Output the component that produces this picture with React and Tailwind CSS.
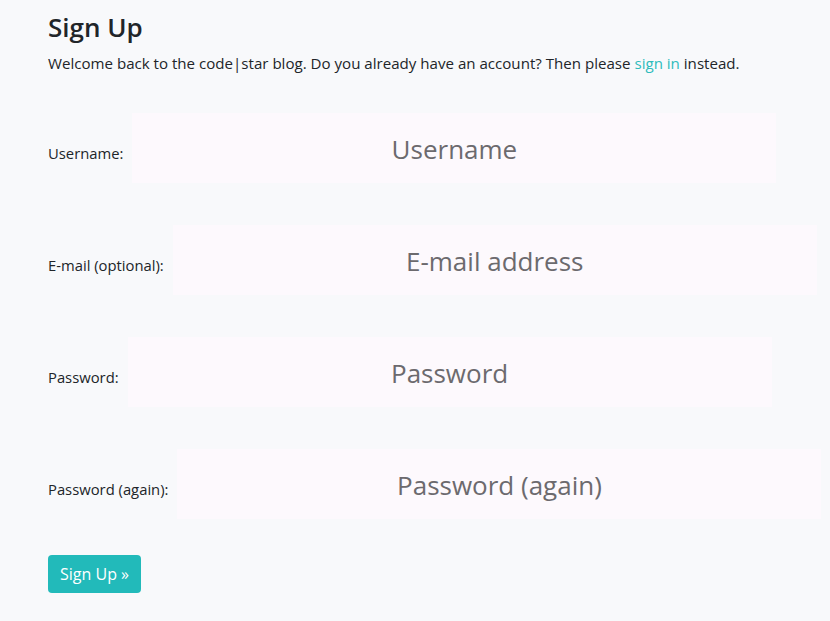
import React from "react";

const FIELDS = [
  { label: "Username:", placeholder: "Username", type: "text" },
  { label: "E-mail (optional):", placeholder: "E-mail address", type: "email" },
  { label: "Password:", placeholder: "Password", type: "password" },
  { label: "Password (again):", placeholder: "Password (again)", type: "password" },
];

export default function App() {
  return (
    <div className="min-h-[621px] w-full bg-[#f8f9fb] text-[#212529] px-[48px] pt-[10px]"
      style={{ fontFamily: '"Open Sans", "Noto Sans", sans-serif' }}>
      <h1 className="text-[26px] font-semibold leading-[34px]">Sign Up</h1>
      <p className="text-[15.1px] mt-[8px] leading-[22px] whitespace-nowrap">
        Welcome back to the code|star blog. Do you already have an account? Then please{" "}
        <a href="#" className="text-[#2ebcbc]">sign in</a> instead.
      </p>

      <form className="mt-[39px] flex flex-col gap-[42px]">
        {FIELDS.map((f) => (
          <div key={f.label} className="flex items-center gap-[9px]">
            <label className="text-[14.8px] pt-[10px] whitespace-nowrap shrink-0">{f.label}</label>
            <input
              type="text"
              placeholder={f.placeholder}
              className="w-[644px] shrink-0 h-[70px] bg-[#fdf9fd] text-center text-[26px] pt-[2px] placeholder:text-[#6c6a6e] outline-none"
            />
          </div>
        ))}
      </form>

      <button className="mt-[36px] h-[38px] px-[12px] rounded-[4px] bg-[#22baba] text-white text-[16px]">
        Sign Up »
      </button>
    </div>
  );
}
